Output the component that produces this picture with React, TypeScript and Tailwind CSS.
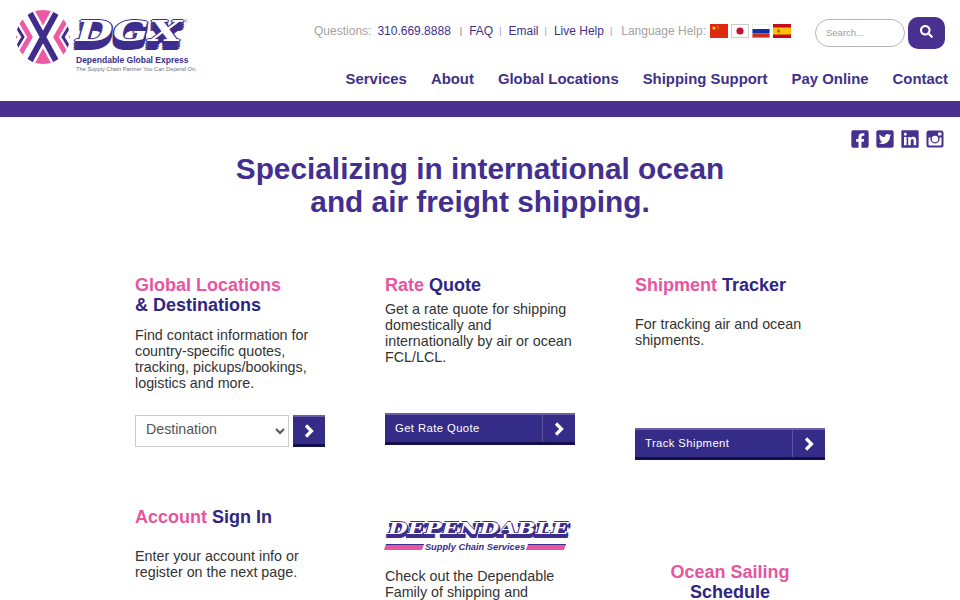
import { FaFacebookSquare, FaLinkedin, FaSearch, FaTwitterSquare } from "react-icons/fa";

const navItems = ["Services", "About", "Global Locations", "Shipping Support", "Pay Online", "Contact"];

function LogoMark() {
  return (
    <svg width="54" height="54" viewBox="0 0 54 54" className="shrink-0">
      <defs>
        <clipPath id="disc">
          <circle cx="27" cy="27" r="27" />
        </clipPath>
      </defs>
      <g clipPath="url(#disc)" fill="none" strokeLinejoin="miter">
        <path d="M8 -4 H46 L27 27 L46 58 H8 L27 27 Z" fill="#ec5aa6" />
        <path d="M9 -6 L45 60 M45 -6 L9 60" stroke="#fff" strokeWidth="11" />
        <path d="M9 -6 L45 60 M45 -6 L9 60" stroke="#3f2c8c" strokeWidth="6" />
        <path d="M3 8 L14 27 L3 46" stroke="#ec5aa6" strokeWidth="5" />
        <path d="M51 8 L40 27 L51 46" stroke="#ec5aa6" strokeWidth="5" />
        <path d="M1 17 L7 27 L1 37" stroke="#3f2c8c" strokeWidth="3" />
        <path d="M53 17 L47 27 L53 37" stroke="#3f2c8c" strokeWidth="3" />
        <path d="M-1 24 L1.5 27 L-1 30 Z" fill="#ec5aa6" />
        <path d="M55 24 L52.5 27 L55 30 Z" fill="#ec5aa6" />
      </g>
    </svg>
  );
}

function Logo() {
  return (
    <div className="flex items-start gap-[6px] pl-4 pt-[10px]">
      <LogoMark />
      <div className="flex flex-col pt-[9px]">
        <div className="flex h-[33px] items-start">
          <span className="inline-block origin-top-left scale-x-[1.57] font-['DejaVu_Serif'] text-[27px] leading-[25px] font-bold text-white italic [text-shadow:-0.5px_1px_0_#3d2d8c,0.5px_2px_0_#3d2d8c,-1px_3px_0_#3d2d8c,0.5px_4px_0_#3d2d8c,-1px_5px_0_#3d2d8c,0.5px_6px_0_#3d2d8c,-1px_7px_0_#3d2d8c,0px_8px_0_#3d2d8c,-1px_9px_0_#3d2d8c,1px_0_0_#3d2d8c,-1px_0_0_#3d2d8c,0_-1px_0_#3d2d8c]">
            DGX
          </span>
          <span className="ml-[41px] text-[5px] leading-[5px] text-gray-400">®</span>
        </div>
        <span className="mt-[4px] text-[8.5px] leading-[9px] font-bold whitespace-nowrap text-[#3d2d8c]">
          Dependable Global Express
        </span>
        <span className="mt-[1px] text-[5.7px] leading-[7px] whitespace-nowrap text-gray-500">
          The Supply Chain Partner You Can Depend On.
        </span>
      </div>
    </div>
  );
}

function Flags() {
  return (
    <div className="flex gap-[3px]">
      <svg width="18" height="14" viewBox="0 0 18 14">
        <rect width="18" height="14" fill="#de2910" />
        <circle cx="4" cy="4" r="1.6" fill="#ffde00" />
        <circle cx="7.5" cy="2" r="0.6" fill="#ffde00" />
        <circle cx="8.5" cy="4" r="0.6" fill="#ffde00" />
      </svg>
      <svg width="18" height="14" viewBox="0 0 18 14">
        <rect x="0.5" y="0.5" width="17" height="13" fill="#fff" stroke="#ccc" />
        <circle cx="9" cy="7" r="3.6" fill="#c8102e" />
      </svg>
      <svg width="18" height="14" viewBox="0 0 18 14">
        <rect width="18" height="14" fill="#fff" />
        <rect y="5" width="18" height="4.5" fill="#0b2fa8" />
        <rect y="9.5" width="18" height="4.5" fill="#d52b1e" />
        <rect x="0.25" y="0.25" width="17.5" height="13.5" fill="none" stroke="#ddd" strokeWidth="0.5" />
      </svg>
      <svg width="18" height="14" viewBox="0 0 18 14">
        <rect width="18" height="14" fill="#c60b1e" />
        <rect y="3.5" width="18" height="7" fill="#ffc400" />
        <rect x="4" y="5.5" width="3" height="3" fill="#b5651d" />
      </svg>
    </div>
  );
}

function InstagramIcon() {
  return (
    <svg width="18" height="18" viewBox="0 0 18 18">
      <path
        fillRule="evenodd"
        d="M3 0.5 H15 A2.5 2.5 0 0 1 17.5 3 V15 A2.5 2.5 0 0 1 15 17.5 H3 A2.5 2.5 0 0 1 0.5 15 V3 A2.5 2.5 0 0 1 3 0.5 Z M2.5 7.5 V14.5 A1 1 0 0 0 3.5 15.5 H14.5 A1 1 0 0 0 15.5 14.5 V7.5 H13.4 A4.6 4.6 0 1 1 4.6 7.5 Z M9 5.8 A3.2 3.2 0 1 0 9 12.2 A3.2 3.2 0 1 0 9 5.8 Z M12.5 2.5 A0.6 0.6 0 0 0 12 3 V5 A0.6 0.6 0 0 0 12.5 5.5 H15 A0.6 0.6 0 0 0 15.5 5 V3 A0.6 0.6 0 0 0 15 2.5 Z"
        fill="#47318f"
      />
    </svg>
  );
}

function Chevron() {
  return (
    <svg width="11" height="14" viewBox="0 0 11 14">
      <path d="M2 1.5 L7.5 7 L2 12.5" fill="none" stroke="#fff" strokeWidth="3.2" />
    </svg>
  );
}

function Header() {
  return (
    <header className="flex h-[101px] justify-between">
      <Logo />
      <div className="flex flex-col items-end pr-3">
        <div className="flex items-start pt-[17px] pr-[3px]">
          <div className="flex items-center gap-[7px] pt-[6px] text-[12px] leading-[16px] whitespace-nowrap text-[#3f3189]">
            <span className="mr-[-1px] text-[#a3a3a3]">Questions:</span>
            <span className="mr-[2px]">310.669.8888</span>
            <span className="text-[9px] text-gray-500">|</span>
            <span className="mr-[-1px]">FAQ</span>
            <span className="text-[9px] text-gray-400">|</span>
            <span className="mr-[-1px]">Email</span>
            <span className="text-[9px] text-gray-400">|</span>
            <span className="mr-[-1px]">Live Help</span>
            <span className="text-[9px] text-gray-400">|</span>
            <span className="ml-[2px] mr-[-3px] text-[#a3a3a3]">Language Help:</span>
            <Flags />
          </div>
          <div className="ml-[24px] flex items-start gap-[3px]">
            <input
              placeholder="Search..."
              className="mt-[2px] h-[28px] w-[90px] rounded-full border border-[#b5b5b5] bg-white px-[10px] pb-[2px] text-[9.5px] outline-none placeholder:text-[#9a9a9a]"
            />
            <button className="flex h-[32px] w-[37px] items-center justify-center rounded-[10px] bg-[#4a318f] pb-[3px] text-white">
              <FaSearch size={13} />
            </button>
          </div>
        </div>
        <nav className="mt-[21px] flex gap-[24px] text-[14.9px] leading-[18px] font-bold text-[#3f3189]">
          {navItems.map((item) => (
            <a key={item} className="whitespace-nowrap">
              {item}
            </a>
          ))}
        </nav>
      </div>
    </header>
  );
}

function Heading({ pink, navy, stacked }: { pink: string; navy: string; stacked?: boolean }) {
  return (
    <h2 className="text-[18px] leading-[20px] font-bold text-[#2e2683]">
      <span className="text-[#e8559f]">{pink}</span>
      {stacked ? <br /> : " "}
      {navy}
    </h2>
  );
}

function WideButton({ label }: { label: string }) {
  return (
    <button className="flex h-[32px] w-[190px] border-t-2 border-b-[3px] border-t-[#6a5ca6] border-b-[#14104f] bg-[#352c87] text-white">
      <span className="flex flex-1 items-center pb-[1px] pl-[10px] text-[11.3px] tracking-[0.4px]">{label}</span>
      <span className="flex w-[33px] items-center justify-center border-l border-[#5e52a0]">
        <Chevron />
      </span>
    </button>
  );
}

function DependableLogo() {
  return (
    <div className="flex h-[32px] w-[186px] flex-col">
      <div className="h-[22px] pl-[3px]">
        <span className="inline-block origin-top-left scale-x-[1.41] font-['DejaVu_Serif'] text-[16px] leading-[17px] font-bold whitespace-nowrap text-white italic [text-shadow:-1px_1px_0_#3d2d8c,1px_1px_0_#3d2d8c,-1px_2px_0_#3d2d8c,1px_2px_0_#3d2d8c,-1px_3px_0_#3d2d8c,1px_3px_0_#3d2d8c,-1px_4px_0_#3d2d8c,1px_4px_0_#3d2d8c,0_-1px_0_#3d2d8c]">
          DEPENDABLE
        </span>
      </div>
      <div className="flex w-[180px] items-center gap-[2px]">
        <span className="h-[6px] flex-1 -skew-x-[20deg] border-t border-[#3d2d8c] bg-[#e8559f]" />
        <span className="text-[9.3px] leading-[10px] font-bold whitespace-nowrap text-[#3d2d8c] italic">
          Supply Chain Services
        </span>
        <span className="h-[6px] flex-1 -skew-x-[20deg] border-t border-[#3d2d8c] bg-[#e8559f]" />
      </div>
    </div>
  );
}

export default function App() {
  return (
    <div className="h-screen overflow-hidden bg-white font-['Liberation_Sans',Arial,sans-serif] text-[#333]">
      <Header />
      <div className="h-[16px] bg-[#4a318f]" />

      <div className="flex justify-end gap-[7px] pt-[13px] pr-[16px] text-[#47318f]">
        <FaFacebookSquare size={18} className="scale-110" />
        <FaTwitterSquare size={18} className="scale-110" />
        <FaLinkedin size={18} className="scale-110" />
        <InstagramIcon />
      </div>

      <h1 className="mt-[4px] text-center text-[29.8px] leading-[33px] font-bold text-[#432f8f]">
        Specializing in international ocean
        <br />
        and air freight shipping.
      </h1>

      <main className="mx-auto mt-[57px] grid w-[690px] grid-cols-3 gap-x-[60px] text-[14.3px] leading-[16px]">
        <section className="h-[232px]">
          <Heading pink="Global Locations" navy="& Destinations" stacked />
          <p className="mt-[12px]">
            Find contact information for country-specific quotes, tracking, pickups/bookings, logistics and more.
          </p>
          <div className="mt-[24px] flex gap-[4px]">
            <select className="h-[32px] w-[154px] border border-[#ccc] bg-white pb-[4px] pl-[6px] text-[14.2px] text-[#555]">
              <option>Destination</option>
            </select>
            <span className="flex h-[32px] w-[32px] items-center justify-center border-t-2 border-b-[3px] border-t-[#6a5ca6] border-b-[#14104f] bg-[#352c87]">
              <Chevron />
            </span>
          </div>
        </section>

        <section>
          <Heading pink="Rate" navy="Quote" />
          <p className="mt-[6px]">
            Get a rate quote for shipping domestically and internationally by air or ocean FCL/LCL.
          </p>
          <div className="mt-[48px]">
            <WideButton label="Get Rate Quote" />
          </div>
        </section>

        <section>
          <Heading pink="Shipment" navy="Tracker" />
          <p className="mt-[21px]">For tracking air and ocean shipments.</p>
          <div className="mt-[80px]">
            <WideButton label="Track Shipment" />
          </div>
        </section>

        <section>
          <Heading pink="Account" navy="Sign In" />
          <p className="mt-[21px]">Enter your account info or register on the next page.</p>
        </section>

        <section className="pt-[13px]">
          <DependableLogo />
          <p className="mt-[16px]">Check out the Dependable Family of shipping and</p>
        </section>

        <section className="pt-[55px] text-center">
          <h2 className="text-[18px] leading-[20px] font-bold text-[#2e2683]">
            <span className="text-[#e8559f]">Ocean Sailing</span>
            <br />
            Schedule
          </h2>
        </section>
      </main>
    </div>
  );
}
